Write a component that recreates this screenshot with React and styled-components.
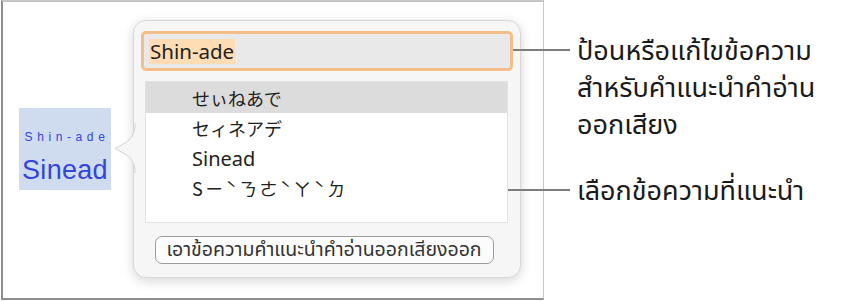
import React from "react";
import styled, { createGlobalStyle } from "styled-components";

const Global = createGlobalStyle`
  html, body { margin: 0; padding: 0; background: #fff; }
  body { font-family: "Noto Sans", "Noto Sans Thai", "Liberation Sans", sans-serif; }
`;

const Page = styled.div`
  display: flex;
  width: 851px;
  height: 301px;
  overflow: hidden;
`;

const Frame = styled.div`
  box-sizing: border-box;
  flex: none;
  margin-left: 1px;
  width: 543px;
  height: 300px;
  border-left: 2px solid #8e8e8e;
  border-top: 2px solid #c6c6c6;
  border-bottom: 2px solid #8e8e8e;
  border-right: 1px solid #c8c8c8;
  display: flex;
  align-items: flex-start;
`;

const Ruby = styled.div`
  flex: none;
  margin: 106px 0 0 16px;
  width: 92px;
  height: 82px;
  background: #cfdcef;
  display: flex;
  flex-direction: column;
  align-items: center;
  color: #3446d8;
  font-family: "Liberation Sans", Arial, sans-serif;
  white-space: nowrap;
`;

const RubySmall = styled.div`
  margin-top: 22px;
  font-size: 12px;
  letter-spacing: 4.6px;
  line-height: 15px;
  padding-left: 4px;
`;

const RubyBig = styled.div`
  margin-top: 10px;
  font-size: 27px;
  line-height: 30px;
  letter-spacing: 0.3px;
`;

const Popover = styled.div`
  flex: none;
  position: relative;
  box-sizing: border-box;
  margin: 18px 0 0 22px;
  width: 388px;
  height: 258px;
  background: #f6f6f6;
  border: 1px solid #d8d8d8;
  border-radius: 13px;
  box-shadow: 0 3px 12px rgba(0, 0, 0, 0.16);
  padding: 10px 7px 0 7px;
  display: flex;
  flex-direction: column;
`;

const Arrow = styled.svg`
  position: absolute;
  left: -21px;
  top: 102px;
`;

const Field = styled.div`
  box-sizing: border-box;
  height: 40px;
  border: 3px solid #f4bd89;
  border-radius: 5px;
  background: #e9e9e9;
  display: flex;
  align-items: center;
  padding-left: 5px;
`;

const Selected = styled.span`
  background: #fedcb4;
  font-family: "Noto Sans", "Liberation Sans", sans-serif;
  font-size: 20.5px;
  line-height: 25px;
  color: #222;
  padding: 0 1px;
`;

const List = styled.div`
  box-sizing: border-box;
  margin: 10px 5px 0 4px;
  height: 142px;
  background: #fff;
  border: 1px solid #e2e2e2;
  display: flex;
  flex-direction: column;
`;

const Row = styled.div`
  height: ${(p) => (p.$first ? 31 : 30)}px;
  flex: none;
  display: flex;
  align-items: center;
  padding-left: 46px;
  background: ${(p) => (p.$active ? "#dcdcdc" : "transparent")};
  font-family: "Noto Sans", "Noto Sans CJK JP", "Noto Sans CJK TC", sans-serif;
  font-size: ${(p) => p.$size || 18}px;
  color: #222;
`;

const Bopo = styled.span`
  font-family: "Noto Sans CJK TC", sans-serif;
  letter-spacing: 2.5px;
`;

const Footer = styled.div`
  display: flex;
  justify-content: center;
  margin-top: 13px;
  padding-right: 6px;
`;

const Button = styled.div`
  box-sizing: border-box;
  width: 339px;
  height: 28px;
  border: 1px solid #9c9c9c;
  border-radius: 7px;
  background: #fcfcfc;
  display: flex;
  align-items: center;
  justify-content: center;
  font-size: 19.5px;
  color: #333;
`;

const Callouts = styled.div`
  position: relative;
  z-index: 2;
  margin-left: -36px;
  display: flex;
  flex-direction: column;
`;

const Callout = styled.div`
  display: flex;
  align-items: flex-start;
  margin-top: ${(p) => p.$top}px;
`;

const Leader = styled.div`
  flex: none;
  margin-left: ${(p) => p.$indent}px;
  width: ${(p) => p.$len}px;
  height: 2px;
  background: #7d7d7d;
  margin-top: ${(p) => p.$y}px;
`;

const Note = styled.div`
  margin-left: 7px;
  font-size: 27px;
  line-height: 37px;
  color: #1a1a1a;
  white-space: nowrap;
`;

export default function App() {
  return (
    <>
      <Global />
      <Page>
        <Frame>
          <Ruby>
            <RubySmall>Shin-ade</RubySmall>
            <RubyBig>Sinead</RubyBig>
          </Ruby>
          <Popover>
            <Arrow width="24" height="50" viewBox="0 0 24 50">
              <path
                d="M22 0 C22 12 18 16 12 20 L2 25.5 L12 31 C18 35 22 39 22 50 L24 50 L24 0 Z"
                fill="#f6f6f6"
              />
              <path
                d="M22 0 C22 12 18 16 12 20 L2 25.5 L12 31 C18 35 22 39 22 50"
                fill="none"
                stroke="#d4d4d4"
                strokeWidth="1"
              />
            </Arrow>
            <Field>
              <Selected>Shin-ade</Selected>
            </Field>
            <List>
              <Row $active $first>せぃねあで</Row>
              <Row>セィネアデ</Row>
              <Row $size={20}>Sinead</Row>
              <Row>
                <Bopo>Sㄧˋㄋㄜˋㄚˋㄉ</Bopo>
              </Row>
            </List>
            <Footer>
              <Button>เอาข้อความคำแนะนำคำอ่านออกเสียงออก</Button>
            </Footer>
          </Popover>
        </Frame>
        <Callouts>
          <Callout $top={31}>
            <Leader $indent={5} $len={57} $y={18} />
            <Note>
              ป้อนหรือแก้ไขข้อความ
              <br />
              สำหรับคำแนะนำคำอ่าน
              <br />
              ออกเสียง
            </Note>
          </Callout>
          <Callout $top={29}>
            <Leader $indent={0} $len={62} $y={18} />
            <Note>เลือกข้อความที่แนะนำ</Note>
          </Callout>
        </Callouts>
      </Page>
    </>
  );
}
